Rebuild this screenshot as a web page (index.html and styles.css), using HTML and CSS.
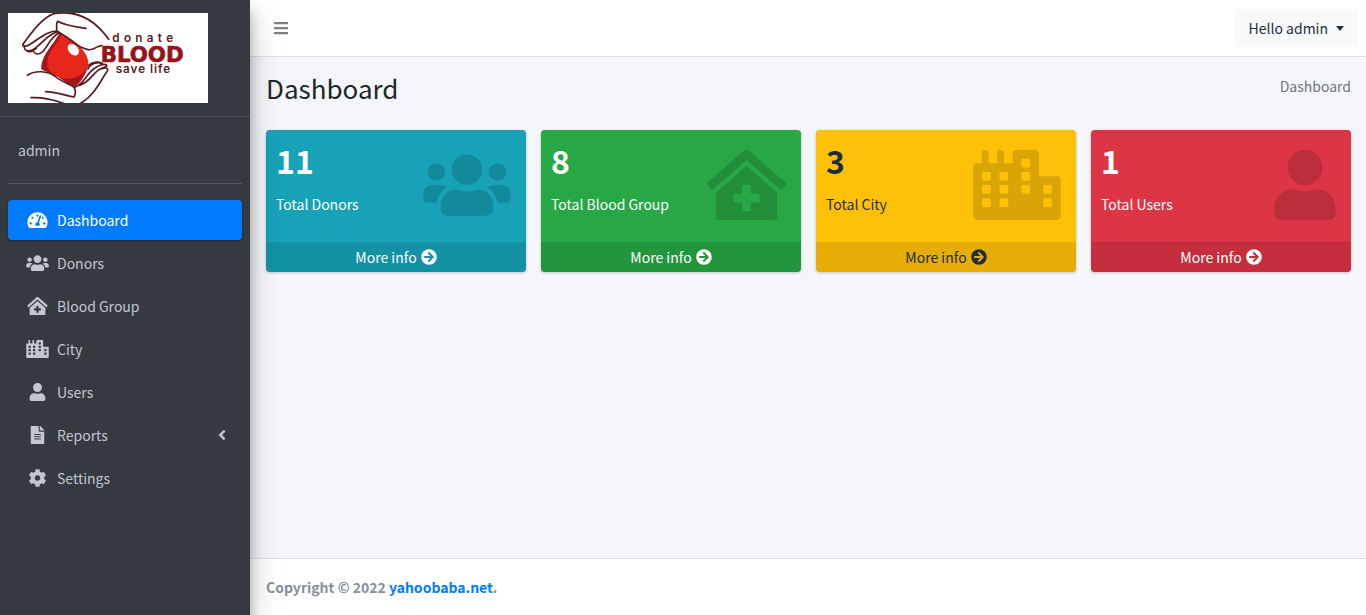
FILE: index.html
```html
<!DOCTYPE html>
<html lang="en">
<head>
<meta charset="utf-8">
<title>Dashboard</title>
<link rel="stylesheet" href="styles.css">
</head>
<body>
<svg class="sprite" aria-hidden="true">
  <symbol id="users" viewBox="0 0 640 512"><path d="M96 224c35.300 0 64-28.700 64-64s-28.700-64-64-64-64 28.700-64 64 28.700 64 64 64zm448 0c35.300 0 64-28.700 64-64s-28.700-64-64-64-64 28.700-64 64 28.700 64 64 64zm32 32h-64c-17.600 0-33.500 7.100-45.100 18.600 40.300 22.100 68.900 62 75.100 109.400h66c17.700 0 32-14.300 32-32v-32c0-35.300-28.700-64-64-64zm-256 0c61.900 0 112-50.100 112-112S381.900 32 320 32 208 82.100 208 144s50.100 112 112 112zm76.800 32h-8.300c-20.800 10-43.900 16-68.500 16s-47.600-6-68.500-16h-8.300C179.600 288 128 339.600 128 403.200V432c0 26.500 21.500 48 48 48h288c26.500 0 48-21.500 48-48v-28.800c0-63.600-51.600-115.200-115.200-115.200zm-223.700-13.400C161.500 263.100 145.600 256 128 256H64c-35.300 0-64 28.700-64 64v32c0 17.700 14.300 32 32 32h65.900c6.300-47.400 34.900-87.300 75.200-109.400z"/></symbol>
  <symbol id="user" viewBox="0 0 448 512"><path d="M224 256c70.700 0 128-57.300 128-128S294.700 0 224 0 96 57.300 96 128s57.300 128 128 128zm89.600 32h-16.700c-22.200 10.200-46.900 16-72.900 16s-50.600-5.800-72.900-16h-16.700C60.200 288 0 348.200 0 422.400V464c0 26.500 21.500 48 48 48h352c26.500 0 48-21.500 48-48v-41.600c0-74.200-60.200-134.400-134.400-134.400z"/></symbol>
  <symbol id="clinic" viewBox="0 0 576 512"><path d="M288 115L69.470 307.710c-1.620 1.460-3.690 2.140-5.470 3.350V496a16 16 0 0 0 16 16h416a16 16 0 0 0 16-16V311.100c-1.700-1.160-3.720-1.820-5.260-3.200zm96 261a8 8 0 0 1-8 8h-56v56a8 8 0 0 1-8 8h-48a8 8 0 0 1-8-8v-56h-56a8 8 0 0 1-8-8v-48a8 8 0 0 1 8-8h56v-56a8 8 0 0 1 8-8h48a8 8 0 0 1 8 8v56h56a8 8 0 0 1 8 8zm186.690-139.720l-255.940-226a39.850 39.850 0 0 0-53.450 0l-256 226a16 16 0 0 0-1.210 22.600L25.500 282.700a16 16 0 0 0 22.600 1.210L277.420 81.630a16 16 0 0 1 21.170 0L527.910 283.900a16 16 0 0 0 22.600-1.210l21.400-23.820a16 16 0 0 0-1.220-22.590z"/></symbol>
  <symbol id="city" viewBox="0 0 640 512"><path fill-rule="evenodd" d="M616 192H480V24c0-13.260-10.740-24-24-24H312c-13.260 0-24 10.740-24 24v72h-64V16c0-8.840-7.160-16-16-16h-16c-8.840 0-16 7.160-16 16v80h-64V16c0-8.840-7.160-16-16-16H80c-8.840 0-16 7.160-16 16v80H24c-13.260 0-24 10.740-24 24v360c0 17.670 14.330 32 32 32h576c17.670 0 32-14.330 32-32V216c0-13.260-10.750-24-24-24zM76 160h40a12 12 0 0 1 12 12v40a12 12 0 0 1-12 12h-40a12 12 0 0 1-12-12v-40a12 12 0 0 1 12-12zM76 256h40a12 12 0 0 1 12 12v40a12 12 0 0 1-12 12h-40a12 12 0 0 1-12-12v-40a12 12 0 0 1 12-12zM76 352h40a12 12 0 0 1 12 12v40a12 12 0 0 1-12 12h-40a12 12 0 0 1-12-12v-40a12 12 0 0 1 12-12zM204 160h40a12 12 0 0 1 12 12v40a12 12 0 0 1-12 12h-40a12 12 0 0 1-12-12v-40a12 12 0 0 1 12-12zM204 256h40a12 12 0 0 1 12 12v40a12 12 0 0 1-12 12h-40a12 12 0 0 1-12-12v-40a12 12 0 0 1 12-12zM204 352h40a12 12 0 0 1 12 12v40a12 12 0 0 1-12 12h-40a12 12 0 0 1-12-12v-40a12 12 0 0 1 12-12zM364 64h40a12 12 0 0 1 12 12v40a12 12 0 0 1-12 12h-40a12 12 0 0 1-12-12v-40a12 12 0 0 1 12-12zM364 160h40a12 12 0 0 1 12 12v40a12 12 0 0 1-12 12h-40a12 12 0 0 1-12-12v-40a12 12 0 0 1 12-12zM364 256h40a12 12 0 0 1 12 12v40a12 12 0 0 1-12 12h-40a12 12 0 0 1-12-12v-40a12 12 0 0 1 12-12zM524 256h40a12 12 0 0 1 12 12v40a12 12 0 0 1-12 12h-40a12 12 0 0 1-12-12v-40a12 12 0 0 1 12-12zM524 352h40a12 12 0 0 1 12 12v40a12 12 0 0 1-12 12h-40a12 12 0 0 1-12-12v-40a12 12 0 0 1 12-12z"/></symbol>
  <symbol id="gauge" viewBox="0 0 576 512"><path d="M288 32C128.940 32 0 160.940 0 320c0 52.800 14.250 102.260 39.060 144.800 5.610 9.620 16.300 15.200 27.440 15.200h443c11.140 0 21.830-5.580 27.440-15.200C561.750 422.260 576 372.800 576 320c0-159.060-128.940-288-288-288zm0 64c14.710 0 26.580 10.130 30.320 23.650-1.110 2.260-2.640 4.230-3.450 6.670l-9.220 27.670c-5.130 3.490-10.970 6.010-17.640 6.010-17.670 0-32-14.330-32-32S270.330 96 288 96zM96 384c-17.670 0-32-14.330-32-32s14.330-32 32-32 32 14.330 32 32-14.330 32-32 32zm48-160c-17.670 0-32-14.330-32-32s14.330-32 32-32 32 14.330 32 32-14.330 32-32 32zm246.770-72.410l-61.330 184C343.130 347.330 352 364.540 352 384c0 11.720-3.380 22.550-8.880 32H232.880c-5.500-9.450-8.880-20.280-8.880-32 0-33.940 26.500-61.430 59.900-63.590l61.340-184.010c4.170-12.560 17.730-19.450 30.360-15.170 12.570 4.190 19.350 17.790 15.170 30.360zm14.660 57.200l15.520-46.550c3.470-1.290 7.130-2.230 11.050-2.230 17.670 0 32 14.330 32 32s-14.330 32-32 32c-11.380-.01-20.890-6.280-26.570-15.220zM480 384c-17.670 0-32-14.330-32-32s14.330-32 32-32 32 14.330 32 32-14.330 32-32 32z"/></symbol>
  <symbol id="file" viewBox="0 0 384 512"><path d="M224 136V0H24C10.700 0 0 10.700 0 24v464c0 13.300 10.700 24 24 24h336c13.300 0 24-10.700 24-24V160H248c-13.200 0-24-10.800-24-24zm64 236c0 6.600-5.400 12-12 12H108c-6.600 0-12-5.400-12-12v-8c0-6.600 5.400-12 12-12h168c6.600 0 12 5.400 12 12v8zm0-64c0 6.600-5.400 12-12 12H108c-6.600 0-12-5.400-12-12v-8c0-6.600 5.400-12 12-12h168c6.600 0 12 5.400 12 12v8zm0-72v8c0 6.600-5.400 12-12 12H108c-6.600 0-12-5.400-12-12v-8c0-6.600 5.400-12 12-12h168c6.600 0 12 5.400 12 12zm96-114.100v6.100H256V0h6.100c6.400 0 12.500 2.500 17 7l97.900 98c4.500 4.500 7 10.600 7 16.900z"/></symbol>
  <symbol id="cog" viewBox="0 0 512 512"><path d="M487.400 315.700l-42.600-24.600c4.300-23.200 4.300-47 0-70.200l42.600-24.600c4.900-2.800 7.100-8.600 5.500-14-11.100-35.600-30-67.800-54.700-94.600-3.800-4.100-10-5.100-14.800-2.300L380.800 110c-17.900-15.400-38.500-27.300-60.800-35.100V25.800c0-5.600-3.900-10.500-9.400-11.700-36.700-8.200-74.300-7.800-109.200 0-5.500 1.200-9.400 6.100-9.400 11.700V75c-22.200 7.900-42.800 19.800-60.800 35.100L88.700 85.500c-4.900-2.800-11-1.900-14.800 2.300-24.700 26.700-43.600 58.900-54.700 94.600-1.700 5.400.6 11.200 5.500 14L67.300 221c-4.300 23.200-4.300 47 0 70.200l-42.600 24.600c-4.900 2.800-7.100 8.600-5.500 14 11.100 35.600 30 67.800 54.700 94.600 3.800 4.100 10 5.100 14.800 2.300l42.600-24.600c17.900 15.400 38.500 27.300 60.800 35.100v49.200c0 5.600 3.900 10.500 9.400 11.700 36.700 8.200 74.300 7.800 109.200 0 5.500-1.200 9.400-6.100 9.400-11.700v-49.200c22.200-7.900 42.800-19.800 60.800-35.100l42.600 24.600c4.900 2.800 11 1.900 14.800-2.300 24.700-26.700 43.600-58.900 54.700-94.600 1.500-5.500-.7-11.300-5.600-14.100zM256 336c-44.100 0-80-35.900-80-80s35.900-80 80-80 80 35.900 80 80-35.900 80-80 80z"/></symbol>
  <symbol id="angle" viewBox="0 0 256 512"><path d="M31.700 239l136-136c9.400-9.400 24.600-9.400 33.900 0l22.600 22.600c9.400 9.400 9.400 24.600 0 33.900L127.900 256l96.400 96.400c9.400 9.400 9.400 24.600 0 33.900L201.700 409c-9.400 9.400-24.600 9.400-33.900 0l-136-136c-9.500-9.400-9.500-24.600-.1-34z"/></symbol>
  <symbol id="arrow" viewBox="0 0 512 512"><path d="M256 8c137 0 248 111 248 248S393 504 256 504 8 393 8 256 119 8 256 8zm-28.900 143.600l75.500 72.400H120c-13.300 0-24 10.700-24 24v16c0 13.300 10.700 24 24 24h182.600l-75.500 72.400c-9.700 9.300-9.900 24.800-.4 34.300l11 10.900c9.400 9.400 24.600 9.400 33.900 0L404.300 273c9.400-9.400 9.400-24.600 0-33.900L271.600 106.300c-9.400-9.400-24.600-9.400-33.900 0l-11 10.900c-9.500 9.600-9.300 25.100.4 34.400z"/></symbol>
  <symbol id="bars" viewBox="0 0 448 512"><path d="M16 132h416a16 16 0 0 0 16-16V76a16 16 0 0 0-16-16H16A16 16 0 0 0 0 76v40a16 16 0 0 0 16 16zm0 160h416a16 16 0 0 0 16-16v-40a16 16 0 0 0-16-16H16a16 16 0 0 0-16 16v40a16 16 0 0 0 16 16zm0 160h416a16 16 0 0 0 16-16v-40a16 16 0 0 0-16-16H16a16 16 0 0 0-16 16v40a16 16 0 0 0 16 16z"/></symbol>
</svg>

<div class="layout">
  <aside class="sidebar">
    <a class="brand" href="#">
      <svg class="logo" viewBox="24 39 600 270" role="img" aria-label="Donate blood, save life">
        <rect x="24" y="39" width="600" height="270" fill="#fff"/>
        <path fill="#a3161b" d="M178 100C164 130 122 166 124 208C140 218 158 218 176 232C192 244 208 252 222 260C240 252 252 232 262 208C272 168 232 120 178 100Z"/>
        <path fill="#e8271b" d="M184 102C172 132 138 160 142 196C148 226 178 238 208 236C242 232 266 212 265 186C262 154 226 120 184 102Z"/>
        <ellipse cx="220" cy="149" rx="14" ry="20" fill="#fff" transform="rotate(-42 220 149)"/>
        <g class="logo-lines">
          <path d="M70 131C96 97 126 53 162 41C220 31 278 49 326 118"/>
          <path d="M258 85C226 80 198 78 173 64C167 72 171 84 170 93C206 109 228 143 264 149C284 152 286 138 305 137"/>
          <path d="M70 131C64 140 76 141 88 134C116 119 136 94 170 93"/>
          <path d="M73 139C72 157 92 154 105 145C130 126 142 104 174 95"/>
          <path d="M80 152C90 160 98 152 109 145"/>
          <path d="M100 153C106 166 120 164 130 153C148 132 152 110 178 98"/>
          <path d="M82 226C104 210 145 213 164 228C184 246 208 250 222 262C228 272 226 284 222 291C196 286 168 276 137 275"/>
          <path d="M93 293C128 291 158 298 190 310"/>
          <path d="M222 262C252 254 258 222 281 207C294 196 312 190 319 195C326 201 306 202 294 211C277 222 270 246 238 256"/>
          <path d="M264 207C270 191 292 184 307 190M306 206C318 201 326 205 322 213C302 240 286 284 242 310"/>
          <path d="M266 196C276 186 296 184 304 190"/>
        </g>
        <text class="logo-small logo-top" x="337" y="126">donate</text>
        <text class="logo-big" x="302" y="185">BLOOD</text>
        <text class="logo-small" x="347" y="218">save life</text>
      </svg>
    </a>
    <div class="sidebar-body">
      <div class="account"><a href="#">admin</a></div>
      <nav class="menu">
        <a class="menu-item active" href="#"><svg class="menu-icon"><use href="#gauge"/></svg><span>Dashboard</span></a>
        <a class="menu-item" href="#"><svg class="menu-icon"><use href="#users"/></svg><span>Donors</span></a>
        <a class="menu-item" href="#"><svg class="menu-icon"><use href="#clinic"/></svg><span>Blood Group</span></a>
        <a class="menu-item" href="#"><svg class="menu-icon"><use href="#city"/></svg><span>City</span></a>
        <a class="menu-item" href="#"><svg class="menu-icon"><use href="#user"/></svg><span>Users</span></a>
        <a class="menu-item" href="#"><svg class="menu-icon"><use href="#file"/></svg><span>Reports</span><svg class="menu-caret"><use href="#angle"/></svg></a>
        <a class="menu-item" href="#"><svg class="menu-icon"><use href="#cog"/></svg><span>Settings</span></a>
      </nav>
    </div>
  </aside>

  <div class="page">
    <header class="topbar">
      <button class="toggle" type="button" aria-label="Toggle menu"><svg class="toggle-icon"><use href="#bars"/></svg></button>
      <button class="greeting" type="button">Hello admin<span class="caret"></span></button>
    </header>
    <main class="content">
      <div class="heading">
        <h1>Dashboard</h1>
        <span class="crumb">Dashboard</span>
      </div>
      <div class="cards">
        <section class="card info">
          <div class="card-body"><div><h3>11</h3><p>Total Donors</p></div><svg class="card-icon wide"><use href="#users"/></svg></div>
          <a class="card-link" href="#">More info <svg class="arrow"><use href="#arrow"/></svg></a>
        </section>
        <section class="card success">
          <div class="card-body"><div><h3>8</h3><p>Total Blood Group</p></div><svg class="card-icon medium"><use href="#clinic"/></svg></div>
          <a class="card-link" href="#">More info <svg class="arrow"><use href="#arrow"/></svg></a>
        </section>
        <section class="card warning">
          <div class="card-body"><div><h3>3</h3><p>Total City</p></div><svg class="card-icon wide"><use href="#city"/></svg></div>
          <a class="card-link" href="#">More info <svg class="arrow"><use href="#arrow"/></svg></a>
        </section>
        <section class="card danger">
          <div class="card-body"><div><h3>1</h3><p>Total Users</p></div><svg class="card-icon narrow"><use href="#user"/></svg></div>
          <a class="card-link" href="#">More info <svg class="arrow"><use href="#arrow"/></svg></a>
        </section>
      </div>
    </main>
    <footer class="footer">Copyright © 2022 <a href="#">yahoobaba.net</a>.</footer>
  </div>
</div>
</body>
</html>
```
FILE: styles.css
```css
* {
  box-sizing: border-box;
}

body {
  margin: 0;
  background: #f4f6f9;
  color: #212529;
  font-family: "Noto Sans CJK SC", "Noto Sans", sans-serif;
  font-size: 14px;
  line-height: 24px;
}

a {
  color: inherit;
  text-decoration: none;
}

button {
  border: 0;
  font: inherit;
  cursor: pointer;
}

svg {
  fill: currentColor;
}

.sprite {
  display: none;
}

.layout {
  display: grid;
  grid-template-columns: 250px minmax(0, 1fr);
  min-height: 100vh;
}

/* Sidebar */
.sidebar {
  position: relative;
  z-index: 2;
  background: #343a40;
  color: #c2c7d0;
  box-shadow: 0 14px 28px rgba(0, 0, 0, .25), 0 10px 10px rgba(0, 0, 0, .22);
}

.brand {
  display: block;
  padding: 13px 8px;
  border-bottom: 1px solid #4b545c;
}

.logo {
  display: block;
  width: 200px;
  height: 90px;
}

.logo-lines {
  fill: none;
  stroke: #571a1e;
  stroke-width: 5;
  stroke-linecap: round;
  stroke-linejoin: round;
}

.logo-small {
  fill: #571a1e;
  font-family: Inter, sans-serif;
  font-size: 35px;
  font-weight: 600;
  letter-spacing: 3px;
}

.logo-top {
  letter-spacing: 13px;
}

.logo-big {
  fill: #95141a;
  stroke: #95141a;
  stroke-width: 2;
  font-family: "DejaVu Sans", sans-serif;
  font-size: 64px;
  font-weight: 700;
}

.sidebar-body {
  padding: 0 8px;
}

.account {
  padding: 21px 10px;
  border-bottom: 1px solid #4f5962;
}

.menu {
  display: flex;
  flex-direction: column;
  gap: 3px;
  margin-top: 16px;
}

.menu-item {
  display: flex;
  align-items: center;
  gap: 6px;
  padding: 8px 16px;
  border-radius: 4px;
}

.menu-item.active {
  background: #007bff;
  color: #fff;
  box-shadow: 0 1px 3px rgba(0, 0, 0, .12), 0 1px 2px rgba(0, 0, 0, .24);
}

.menu-icon {
  width: 27px;
  height: 18px;
}

.menu-caret {
  width: 8px;
  height: 16px;
  margin-left: auto;
}

/* Page */
.page {
  display: flex;
  flex-direction: column;
  min-width: 0;
}

.topbar {
  display: flex;
  align-items: center;
  justify-content: space-between;
  padding: 9px 8px;
  background: #fff;
  border-bottom: 1px solid #dee2e6;
}

.toggle {
  display: flex;
  padding: 8px 16px;
  background: none;
  color: #7f7f7f;
}

.toggle-icon {
  width: 14px;
  height: 16px;
}

.greeting {
  display: flex;
  align-items: center;
  gap: 8px;
  padding: 7px 14px;
  border-radius: 4px;
  background: #f8f9fa;
  color: #1f2d3d;
}

.caret {
  border-top: 5px solid;
  border-right: 4px solid transparent;
  border-left: 4px solid transparent;
}

.content {
  flex: 1;
  padding: 14px 15px 14px 16px;
}

.heading {
  display: flex;
  align-items: flex-start;
  justify-content: space-between;
  margin-bottom: 25px;
}

h1 {
  margin: 0;
  font-size: 26px;
  font-weight: 400;
  line-height: 34px;
}

.crumb {
  padding-top: 3px;
  color: #6c757d;
}

.cards {
  display: grid;
  grid-template-columns: repeat(4, minmax(0, 1fr));
  gap: 15px;
}

.card {
  overflow: hidden;
  border-radius: 4px;
  color: #fff;
  box-shadow: 0 0 1px rgba(0, 0, 0, .13), 0 1px 3px rgba(0, 0, 0, .2);
}

.card.info {
  background: #17a2b8;
}

.card.success {
  background: #28a745;
}

.card.warning {
  background: #ffc107;
  color: #1f2d3d;
}

.card.danger {
  background: #dc3545;
}

.card-body {
  display: flex;
  justify-content: space-between;
  padding: 10px 15px 10px 10px;
}

.card h3 {
  margin: 0 0 12px;
  font-size: 32px;
  font-weight: 700;
  line-height: 40px;
}

.card p {
  margin: 0 0 16px;
}

.card-icon {
  height: 70px;
  margin-top: 10px;
  fill: rgba(0, 0, 0, .15);
}

.card-icon.wide {
  width: 88px;
}

.card-icon.medium {
  width: 79px;
}

.card-icon.narrow {
  width: 62px;
}

.card-link {
  display: flex;
  align-items: center;
  justify-content: center;
  gap: 4px;
  padding: 3px 0;
  background: rgba(0, 0, 0, .1);
}

.arrow {
  width: 16px;
  height: 16px;
}

.footer {
  padding: 16px;
  background: #fff;
  border-top: 1px solid #dee2e6;
  color: #869099;
  font-weight: 700;
}

.footer a {
  color: #007bff;
}
```
